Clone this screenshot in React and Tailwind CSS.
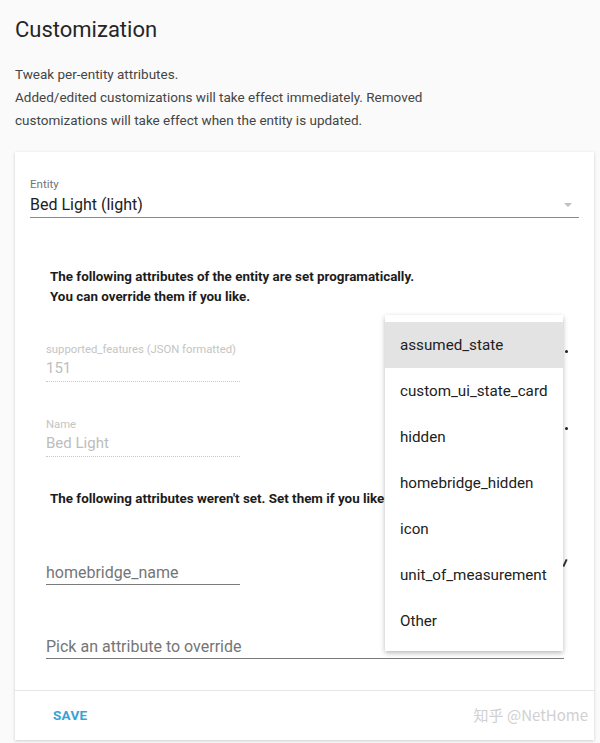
import React from "react";

const options = [
  "assumed_state",
  "custom_ui_state_card",
  "hidden",
  "homebridge_hidden",
  "icon",
  "unit_of_measurement",
  "Other",
];

function DisabledField({ label, value }) {
  return (
    <div className="w-[194px] border-b border-dotted border-[#c8c8c8] pb-[2px]">
      <div className="text-[11.3px] leading-[15px] text-[#c4c4c4]">{label}</div>
      <div className="text-[15px] leading-[22px] text-[#bdbdbd]">{value}</div>
    </div>
  );
}

export default function App() {
  return (
    <div
      className="min-h-[743px] w-[600px] bg-[#fafafa] px-[15px] pt-[16px]"
      style={{ fontFamily: "Roboto, 'Liberation Sans', sans-serif" }}
    >
      <h1 className="text-[22px] leading-[28px] text-[#262626]">Customization</h1>

      <div className="mt-[19px] text-[13.5px] leading-[23px] text-[#454545]">
        <div>Tweak per-entity attributes.</div>
        <div>Added/edited customizations will take effect immediately. Removed</div>
        <div>customizations will take effect when the entity is updated.</div>
      </div>

      <div className="relative mt-[20px] w-[579px] bg-white shadow-[0_1px_3px_rgba(0,0,0,0.18)]">
        <div className="px-[15px] pt-[25px]">
          <div className="border-b border-[#8a8a8a]">
            <div className="text-[11.5px] leading-[15px] text-[#737373]">Entity</div>
            <div className="flex items-center justify-between pr-[7px] text-[16px] leading-[25px] text-[#212121]">
              <span>Bed Light (light)</span>
              <span className="h-0 w-0 border-x-[4px] border-t-[4px] border-x-transparent border-t-[#c0c0c0]" />
            </div>
          </div>

          <div className="px-[16px]">
            <div className="mt-[49px] pl-[4px] text-[13.4px] font-bold leading-[20px] text-[#1c1c1c]">
              <div>The following attributes of the entity are set programatically.</div>
              <div>You can override them if you like.</div>
            </div>

            <div className="mt-[35px]">
              <DisabledField label="supported_features (JSON formatted)" value="151" />
            </div>
            <div className="mt-[35px]">
              <DisabledField label="Name" value="Bed Light" />
            </div>

            <div className="mt-[32px] pl-[4px] text-[13.4px] font-bold leading-[20px] text-[#1c1c1c]">
              The following attributes weren't set. Set them if you like
            </div>

            <div className="mt-[53px] w-[194px] border-b border-[#7a7a7a] text-[16px] leading-[22px] text-[#757575]">
              homebridge_name
            </div>

            <div className="mt-[51px] w-[518px] border-b border-[#7a7a7a] text-[16px] leading-[22px] text-[#757575]">
              Pick an attribute to override
            </div>
          </div>
        </div>

        <div className="mt-[31px] flex h-[50px] items-center justify-between border-t border-[#e6e6e6] pl-[38px] pr-[6px]">
          <span className="text-[13.5px] font-bold tracking-[0.3px] text-[#3aa3d4]">SAVE</span>
          <span
            className="text-[15px] text-[#d0d0d0]"
            style={{ fontFamily: "'Noto Sans CJK SC', Roboto, sans-serif" }}
          >
            知乎 @NetHome
          </span>
        </div>

        {/* icons peeking out from behind the menu */}
        <span className="absolute left-[550px] top-[198px] h-[3px] w-[3px] rounded-full bg-[#222]" />
        <span className="absolute left-[550px] top-[275px] h-[3px] w-[3px] rounded-full bg-[#222]" />
        <span className="absolute left-[549px] top-[407px] h-[8px] w-[2px] rotate-[25deg] bg-[#333]" />

        <div className="absolute left-[370px] top-[163px] w-[178px] bg-white py-[7px] shadow-[0_2px_5px_rgba(0,0,0,0.28)]">
          {options.map((o, i) => (
            <div
              key={o}
              className={`flex h-[46px] items-center pl-[15px] text-[15.2px] text-[#212121] ${
                i === 0 ? "bg-[#e3e3e3]" : ""
              }`}
            >
              {o}
            </div>
          ))}
        </div>
      </div>
    </div>
  );
}
